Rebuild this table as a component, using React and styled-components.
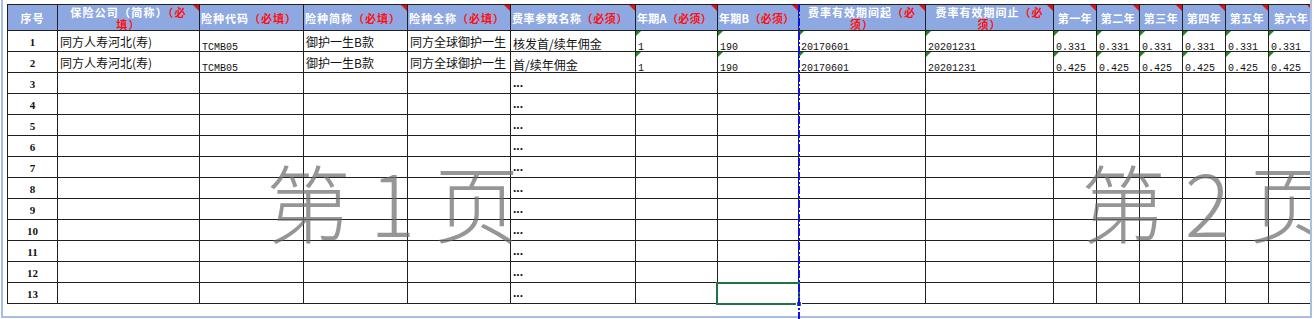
import React from 'react';
import styled, { createGlobalStyle } from 'styled-components';

const Global = createGlobalStyle`
  html, body { margin: 0; padding: 0; background: #fff; }
  body { font-family: "Noto Sans CJK SC", "Liberation Sans", sans-serif; }
`;

const Page = styled.div`
  position: relative;
  width: 1315px;
  height: 319px;
  overflow: hidden;
  background: #fff;
`;

const Frame = styled.div`
  position: relative;
  box-sizing: border-box;
  margin-left: 1px;
  width: 1311px;
  height: 318px;
  padding: 4px 0 0 4px;
  border: 2px solid #a8bfe3;
  border-top: none;
  overflow: hidden;
`;

const Sheet = styled.table`
  border-collapse: collapse;
  table-layout: fixed;
  width: 1305px;
`;

const Row = styled.tr`
  height: ${p => p.$h}px;
`;

const HeadCell = styled.th`
  position: relative;
  padding: 0 1px;
  background: #8ea9e1;
  border: 1px solid #202020;
  color: #fff;
  font: bold 11px/12px "Noto Sans CJK SC", sans-serif;
  letter-spacing: ${p => p.$ls}px;
  text-align: ${p => p.$align};
  vertical-align: middle;
  white-space: nowrap;
  overflow: hidden;
`;

const Req = styled.span`
  color: #ff1010;
`;

const Line = styled.div``;

const Cell = styled.td`
  position: relative;
  padding: 0 2px ${p => p.$pb}px 2px;
  border: 1px solid #202020;
  white-space: nowrap;
  vertical-align: bottom;
  color: #111;
  font-family: "Noto Sans CJK SC", sans-serif;
  font-size: 12px;
  line-height: 15px;
`;

const NumCell = styled(Cell)`
  text-align: center;
  vertical-align: middle;
  padding-top: 2px;
  font: bold 11px/12px "Liberation Serif", serif;
`;

const MonoCell = styled(Cell)`
  font: 10px/7px "Liberation Mono", monospace;
  padding-bottom: 0;
`;

const Dots = styled(Cell)`
  font-weight: bold;
  font-family: "Liberation Sans", sans-serif;
`;

const RedMark = styled.span`
  position: absolute;
  top: 0;
  right: 0;
  width: 0;
  height: 0;
  border-top: 6px solid #e81010;
  border-left: 6px solid transparent;
`;

const GreenMark = styled.span`
  position: absolute;
  top: 0;
  left: 0;
  width: 0;
  height: 0;
  border-top: 5px solid #1c8a1c;
  border-right: 5px solid transparent;
`;

const Selection = styled.span`
  position: absolute;
  left: -2px;
  top: -1px;
  right: -2px;
  bottom: -2px;
  border: 2px solid #217346;
  pointer-events: none;
  z-index: 2;
`;

const Handle = styled.span`
  position: absolute;
  right: -4px;
  bottom: -4px;
  width: 4px;
  height: 4px;
  background: #217346;
  border: 1px solid #fff;
`;

const Watermark = styled.div`
  position: absolute;
  top: ${p => p.$top}px;
  left: ${p => p.$left}px;
  font: 300 85px/1 "Noto Sans CJK SC", sans-serif;
  color: rgba(110, 110, 110, 0.72);
  white-space: pre;
  pointer-events: none;
`;

const PageBreak = styled.div`
  position: absolute;
  left: 798px;
  top: 4px;
  bottom: 0;
  width: 2px;
  background: repeating-linear-gradient(
    to bottom,
    #1010e8 0 8px,
    transparent 8px 10px,
    #1010e8 10px 12px,
    transparent 12px 14px
  );
  pointer-events: none;
  z-index: 3;
`;

const HEADS = [
  { w: 50, align: 'center', mark: false, ls: 1, lines: [[['序号']]] },
  { w: 142, align: 'center', mark: true, ls: 1.2, lines: [[['保险公司（简称）'], ['（必', 1]], [['填）', 1]]] },
  { w: 104, align: 'left', mark: false, ls: 1, lines: [[['险种代码'], ['（必填）', 1]]] },
  { w: 104, align: 'left', mark: true, ls: 1, lines: [[['险种简称'], ['（必填）', 1]]] },
  { w: 103, align: 'left', mark: true, ls: 1, lines: [[['险种全称'], ['（必填）', 1]]] },
  { w: 125, align: 'left', mark: true, ls: 0.6, lines: [[['费率参数名称'], ['（必须）', 1]]] },
  { w: 82, align: 'left', mark: true, ls: 0.3, lines: [[['年期A'], ['（必须）', 1]]] },
  { w: 81, align: 'left', mark: true, ls: 0.3, lines: [[['年期B'], ['（必须）', 1]]] },
  { w: 127, align: 'center', mark: true, ls: 1, lines: [[['费率有效期间起'], ['（必', 1]], [['须）', 1]]] },
  { w: 128, align: 'center', mark: true, ls: 1, lines: [[['费率有效期间止'], ['（必', 1]], [['须）', 1]]] },
  { w: 43, align: 'center', mark: true, ls: 0.5, lines: [[['第一年']]] },
  { w: 43, align: 'center', mark: true, ls: 0.5, lines: [[['第二年']]] },
  { w: 43, align: 'center', mark: true, ls: 0.5, lines: [[['第三年']]] },
  { w: 43, align: 'center', mark: true, ls: 0.5, lines: [[['第四年']]] },
  { w: 43, align: 'center', mark: true, ls: 0.5, lines: [[['第五年']]] },
  { w: 45, align: 'center', mark: true, ls: 0.5, lines: [[['第六年']]] },
];

const mkRow = (param, rate) => [
  '同方人寿河北(寿)', 'TCMB05', '御护一生B款', '同方全球御护一生', param,
  '1', '190', '20170601', '20201231', rate, rate, rate, rate, rate, rate,
];

const DATA = [
  mkRow('核发首/续年佣金', '0.331'),
  mkRow('首/续年佣金', '0.425'),
];

const ROWS = Array.from({ length: 13 }, (_, i) => i + 1);

function DataRow({ n }) {
  const values = DATA[n - 1];
  const cells = [];
  cells.push(<NumCell key="n" $pb={0}>{n}</NumCell>);
  for (let c = 1; c < 16; c++) {
    const v = values ? values[c - 1] : '';
    const selected = n === 13 && c === 7;
    const extra = (
      <>
        {values && c >= 6 && <GreenMark />}
        {selected && (
          <Selection>
            <Handle />
          </Selection>
        )}
      </>
    );
    if (c === 2 || c >= 6) {
      cells.push(
        <MonoCell key={c} $pb={0}>
          {extra}
          {v}
        </MonoCell>
      );
    } else if (c === 5 && !values) {
      cells.push(<Dots key={c} $pb={2}>...</Dots>);
    } else {
      cells.push(
        <Cell key={c} $pb={c === 5 ? 0 : 2}>
          {extra}
          {v}
        </Cell>
      );
    }
  }
  return <Row $h={21}>{cells}</Row>;
}

export default function App() {
  return (
    <Page>
      <Global />
      <Frame>
        <Sheet>
          <colgroup>
            {HEADS.map((h, i) => (
              <col key={i} style={{ width: h.w }} />
            ))}
          </colgroup>
          <thead>
            <Row $h={26}>
              {HEADS.map((h, i) => (
                <HeadCell key={i} $align={h.align} $ls={h.ls}>
                  {h.mark && <RedMark />}
                  {h.lines.map((ln, j) => (
                    <Line key={j}>
                      {ln.map(([t, r], k) => (r ? <Req key={k}>{t}</Req> : <span key={k}>{t}</span>))}
                    </Line>
                  ))}
                </HeadCell>
              ))}
            </Row>
          </thead>
          <tbody>
            {ROWS.map(n => (
              <DataRow key={n} n={n} />
            ))}
          </tbody>
        </Sheet>
        <Watermark $left={263} $top={157}>第 1 页</Watermark>
        <Watermark $left={1078} $top={157}>第 2 页</Watermark>
      </Frame>
      <PageBreak />
    </Page>
  );
}
